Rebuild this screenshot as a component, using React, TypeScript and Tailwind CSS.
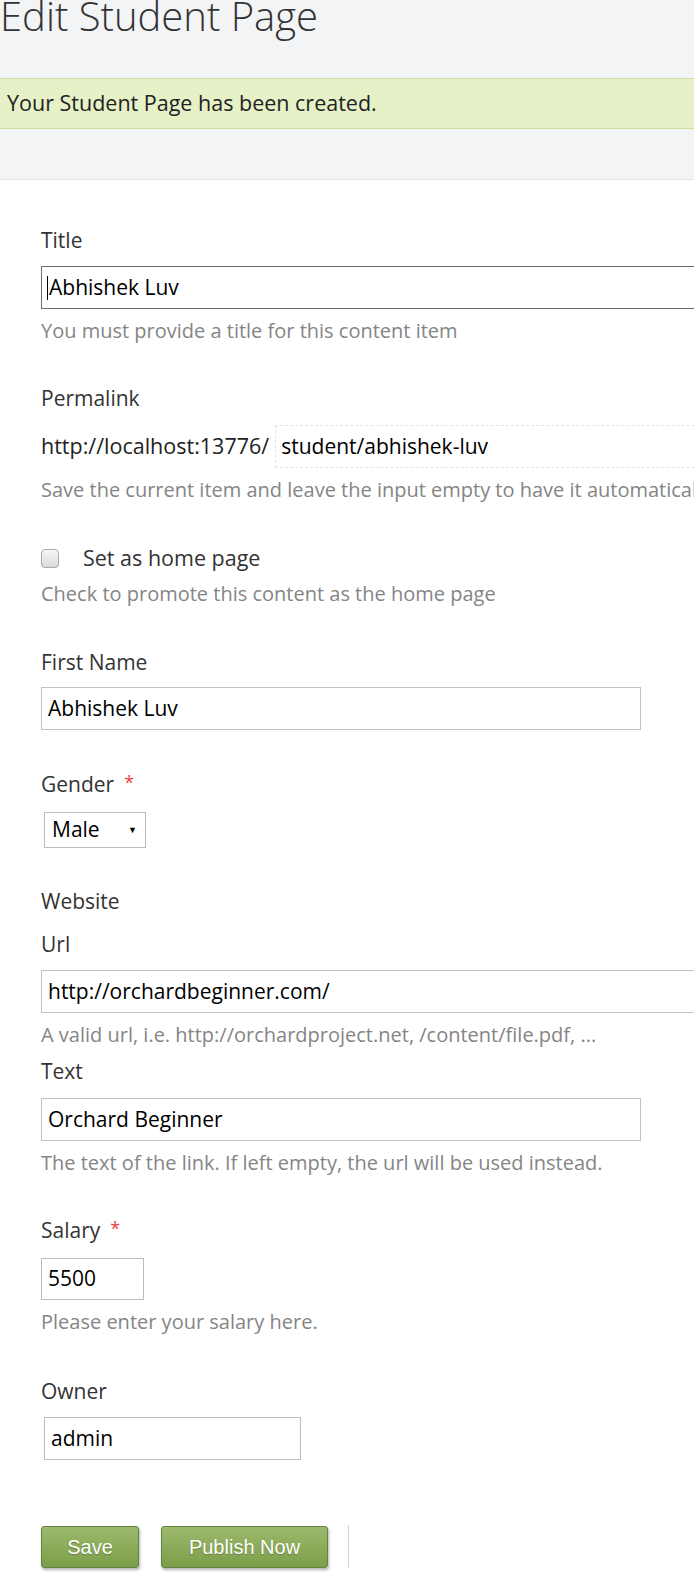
const segoe = { fontFamily: '"Open Sans", "Noto Sans", sans-serif' };

function Label({ children, required }: { children: React.ReactNode; required?: boolean }) {
  return (
    <div className="text-[21px] leading-[28px] text-[#333]">
      {children}
      {required && <span className="ml-[10px] text-[#e8413c] text-[18px] relative -top-[3px]">*</span>}
    </div>
  );
}

function Hint({ children }: { children: React.ReactNode }) {
  return <div className="mt-2 text-[20px] leading-[28px] text-[#858585] whitespace-nowrap">{children}</div>;
}

function TextBox({ value, className = '' }: { value: string; className?: string }) {
  return (
    <div
      className={`h-[43px] border border-[#c2c2c2] bg-white flex items-center px-[6px] text-[21px] text-black whitespace-nowrap ${className}`}
    >
      {value}
    </div>
  );
}

export default function App() {
  return (
    <div className="w-[694px] min-h-[1578px] bg-white overflow-hidden" style={segoe}>
      <div className="h-[180px] bg-[#f3f4f6] border-b border-[#e2e3e5] flex flex-col">
        <h1 className="text-[40px] font-light leading-[44px] h-[44px] -mt-[6px] text-[#333] whitespace-nowrap">
          Edit Student Page
        </h1>
        <div className="mt-[40px] h-[51px] bg-[#e6f1c8] border-y border-[#cce29c] flex items-center px-[7px] text-[21.5px] text-[#222]">
          Your Student Page has been created.
        </div>
      </div>

      <div className="pl-[41px] pt-[46px]">
        <Label>Title</Label>
        <div className="mt-3 h-[43px] w-[700px] border border-[#6e6f60] bg-white flex items-center pl-[5px] text-[21px] text-black">
          <span className="w-px h-[24px] bg-black mr-[1px]" />
          Abhishek Luv
        </div>
        <Hint>You must provide a title for this content item</Hint>

        <div className="mt-[39px]">
          <Label>Permalink</Label>
          <div className="mt-[13px] flex items-center">
            <span className="text-[21.5px] text-[#222] mr-[6px] whitespace-nowrap">http://localhost:13776/</span>
            <div className="h-[43px] w-[500px] shrink-0 border border-dashed border-[#e6e6d8] flex items-center px-[5px] text-[21px] text-black">
              student/abhishek-luv
            </div>
          </div>
          <Hint>Save the current item and leave the input empty to have it automatically generated.</Hint>
        </div>

        <div className="mt-[40px]">
          <div className="flex items-center h-[28px]">
            <span className="w-[18px] h-[19px] rounded-[4px] border border-[#a9a9a9] bg-gradient-to-b from-[#f6f6f6] to-[#dcdcdc]" />
            <span className="ml-[24px] text-[21.5px] text-[#333]">Set as home page</span>
          </div>
          <Hint>Check to promote this content as the home page</Hint>
        </div>

        <div className="mt-[40px]">
          <Label>First Name</Label>
          <TextBox value="Abhishek Luv" className="mt-[11px] w-[600px]" />
        </div>

        <div className="mt-[40px]">
          <Label required>Gender</Label>
          <div className="mt-[13px] ml-[3px] w-[102px] h-[36px] border border-[#bdbdbd] bg-white flex items-center justify-between pl-[7px] pr-[8px]">
            <span className="text-[21px] text-black">Male</span>
            <span className="text-[9px] text-black">▼</span>
          </div>
        </div>

        <div className="mt-[39px]">
          <Label>Website</Label>
          <div className="mt-[15px]">
            <Label>Url</Label>
          </div>
          <TextBox value="http://orchardbeginner.com/" className="mt-3 w-[700px]" />
          <Hint>A valid url, i.e. http://orchardproject.net, /content/file.pdf, ...</Hint>
          <div className="mt-2">
            <Label>Text</Label>
          </div>
          <TextBox value="Orchard Beginner" className="mt-[13px] w-[600px]" />
          <Hint>The text of the link. If left empty, the url will be used instead.</Hint>
        </div>

        <div className="mt-[39px]">
          <Label required>Salary</Label>
          <div className="mt-[13px] w-[103px] h-[42px] border border-[#bdbdbd] bg-white flex items-center px-[6px] text-[21px] text-black">
            5500
          </div>
          <Hint>Please enter your salary here.</Hint>
        </div>

        <div className="mt-[41px]">
          <Label>Owner</Label>
          <div className="mt-3 ml-[3px] w-[257px] h-[43px] border border-[#bdbdbd] bg-white flex items-center px-[6px] text-[21px] text-black">
            admin
          </div>
        </div>

        <div className="mt-[65px] flex items-center" style={{ fontFamily: '"Liberation Sans", Arial, sans-serif' }}>
          <button className="w-[98px] h-[42px] rounded-[3px] border border-[#62833f] bg-gradient-to-b from-[#9db96c] to-[#7c9e49] text-white text-[20px] shadow-[1px_2px_3px_rgba(0,0,0,0.3)] [text-shadow:0_1px_1px_rgba(0,0,0,0.25)]">
            Save
          </button>
          <button className="ml-[22px] w-[167px] h-[42px] rounded-[3px] border border-[#62833f] bg-gradient-to-b from-[#9db96c] to-[#7c9e49] text-white text-[20px] shadow-[1px_2px_3px_rgba(0,0,0,0.3)] [text-shadow:0_1px_1px_rgba(0,0,0,0.25)]">
            Publish Now
          </button>
          <span className="ml-[20px] w-px h-[43px] bg-[#d2d2d2]" />
        </div>
      </div>
    </div>
  );
}
